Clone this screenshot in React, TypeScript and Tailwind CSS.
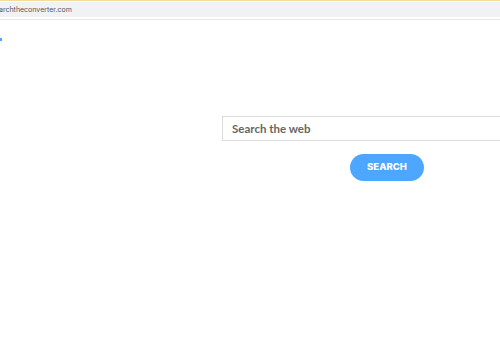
const App = () => {
  return (
    <div
      className="w-[500px] h-[350px] bg-white overflow-hidden flex flex-col"
      style={{ fontFamily: "Inter, 'Noto Sans', sans-serif" }}
    >
      <div className="h-px bg-[#f3dc9c]" />
      <div className="h-[15px] mt-px bg-[#f1f2f4] flex items-center">
        <span className="text-[7px] leading-none text-[#555] -ml-px">
          archtheconverter.com
        </span>
      </div>
      <div className="h-px mt-[2px] bg-[#e6e7e9]" />

      <div className="mt-[18px] w-[2px] h-[3px] bg-[#4da6ff]" />

      <div className="mt-[75px] ml-[222px] flex flex-col">
        <div className="h-[25px] w-[300px] border border-[#dcdcdc] flex items-center pl-[9px]">
          <span
            className="text-[11.5px] font-bold text-[#666]"
            style={{ fontFamily: "Lato, Inter, sans-serif" }}
          >
            Search the web
          </span>
        </div>
        <button className="mt-[13px] ml-[128px] w-[74px] h-[27px] rounded-full bg-[#4da6ff] text-white text-[9.5px] font-extrabold flex items-center justify-center">
          SEARCH
        </button>
      </div>
    </div>
  );
};

export default App;
